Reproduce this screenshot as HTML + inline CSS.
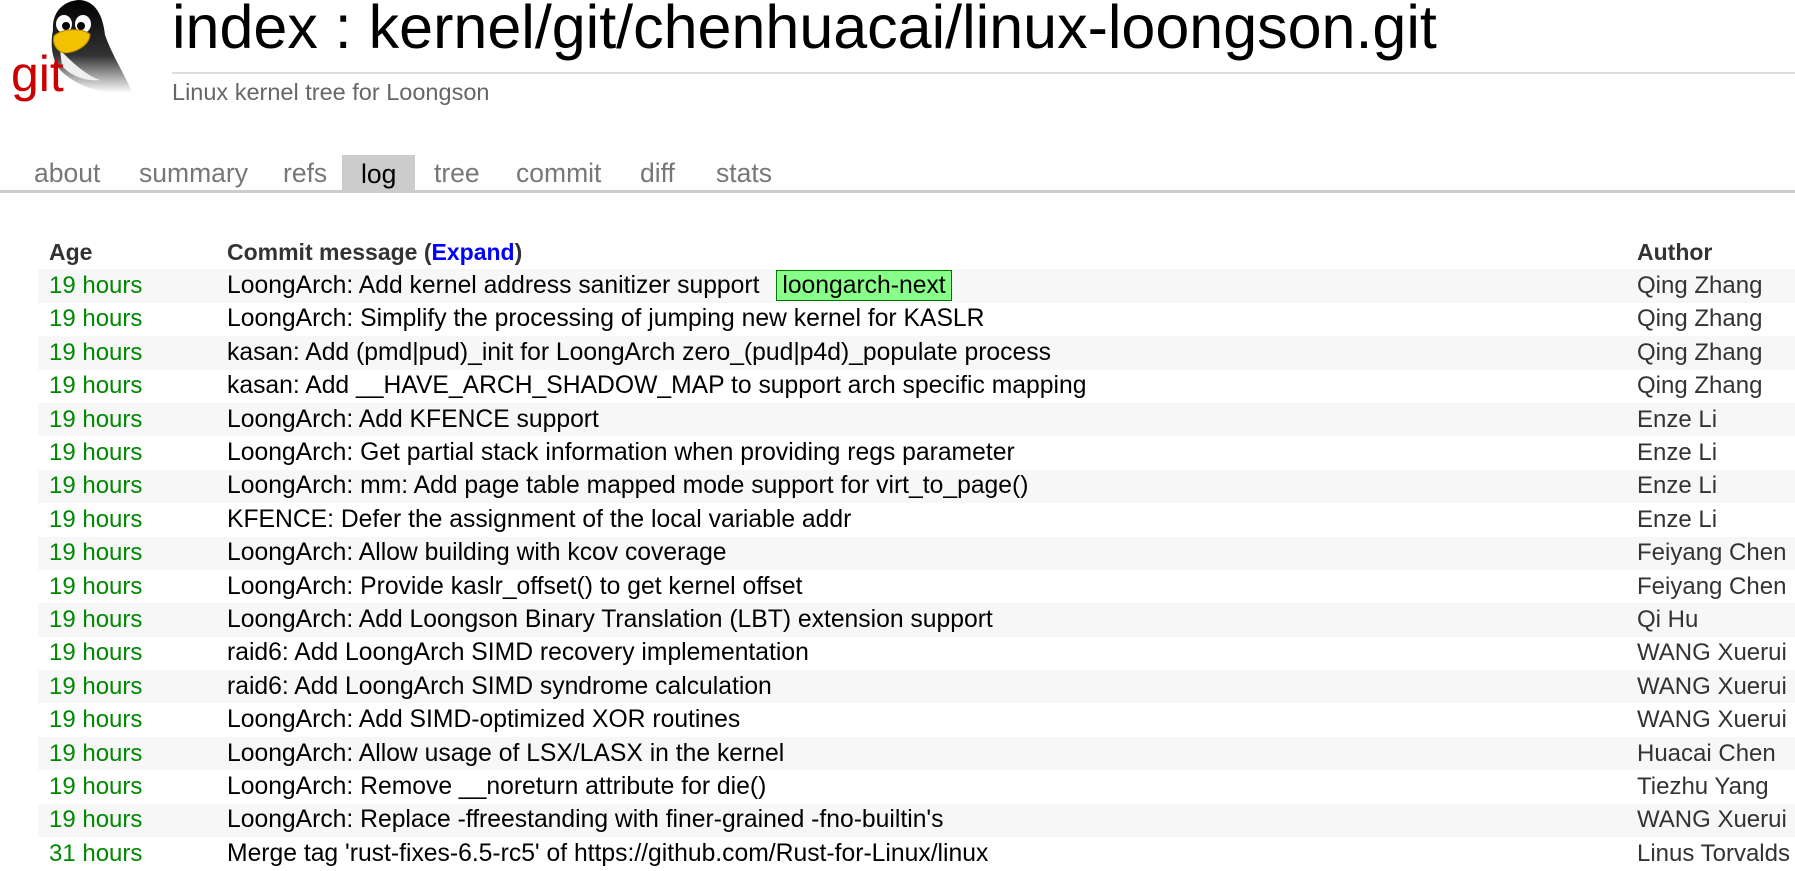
<!DOCTYPE html>
<html><head><meta charset="utf-8"><style>
body{margin:0;background:#fff;font-family:"Liberation Sans",sans-serif;width:1795px;height:871px;overflow:hidden;position:relative}
.logo{position:absolute;left:0;top:0}
.title{position:absolute;left:172px;top:-8px;font-size:61px;color:#000;white-space:nowrap}
.hr{position:absolute;left:172px;right:0;top:72px;height:2px;background:#ddd}
.sub{position:absolute;left:172px;top:79px;font-size:23.5px;color:#666}
.tabs{position:absolute;left:0;right:0;top:155px;height:35px;border-bottom:3px solid #ccc}
.tabs span{position:absolute;top:3px;font-size:26.5px;color:#777}
.tabs .act{background:#ccc;color:#000;top:0;height:35px;line-height:38px;padding:0 19px;left:342px}
table{position:absolute;left:38px;top:236px;border-collapse:collapse;width:1757px}
td,th{height:33.4px;padding:0 0 0 11px;font-size:24px;text-align:left;white-space:nowrap}
td.m{font-size:24.7px}
th{color:#333;font-weight:bold;font-size:23px}
td{color:#000}
td.a{color:#080}
td.u{color:#333}
tr.o td{background:#f7f7f7}
.deco{background:#88ff88;border:1px solid #007700;padding:1px 5px;margin-left:10px}
a{color:#00f;text-decoration:none}
</style></head><body>
<svg class="logo" width="140" height="110" viewBox="0 0 140 110">
<defs><linearGradient id="g" x1="0" y1="0" x2="0" y2="1"><stop offset="0" stop-color="#000"/><stop offset="0.6" stop-color="#333"/><stop offset="1" stop-color="#fff"/></linearGradient></defs>
<path d="M78 0 C60 2 52 15 53 30 C50 45 52 60 60 70 C80 90 110 95 132 92 C125 75 112 55 105 35 C103 15 95 0 78 0Z" fill="url(#g)"/>
<path d="M60 50 C70 60 85 75 100 80 C85 82 70 75 62 66Z" fill="#eee"/>
<ellipse cx="64" cy="24" rx="8" ry="9" fill="#fff"/><ellipse cx="83" cy="24" rx="8" ry="9" fill="#fff"/>
<circle cx="66" cy="26" r="4" fill="#000"/><circle cx="81" cy="26" r="4" fill="#000"/>
<path d="M54 36 C62 28 82 28 90 34 C90 45 76 53 64 53 C56 51 52 43 54 36Z" fill="#f2c200" stroke="#b08000" stroke-width="1"/>
<text x="11" y="91" font-family="Liberation Sans,sans-serif" font-size="50" fill="#c00">git</text>
</svg>
<div class="title">index : kernel/git/chenhuacai/linux-loongson.git</div>
<div class="hr"></div>
<div class="sub">Linux kernel tree for Loongson</div>
<div class="tabs">
<span style="left:34px">about</span><span style="left:139px">summary</span><span style="left:283px">refs</span><span class="act">log</span><span style="left:434px">tree</span><span style="left:516px">commit</span><span style="left:640px">diff</span><span style="left:716px">stats</span>
</div>
<table>
<colgroup><col style="width:178px"><col style="width:1410px"><col></colgroup>
<tr><th>Age</th><th>Commit message (<a>Expand</a>)</th><th>Author</th></tr>
<tr class="o"><td class="a">19 hours</td><td class="m">LoongArch: Add kernel address sanitizer support <span class="deco">loongarch-next</span></td><td class="u">Qing Zhang</td></tr>
<tr><td class="a">19 hours</td><td class="m">LoongArch: Simplify the processing of jumping new kernel for KASLR</td><td class="u">Qing Zhang</td></tr>
<tr class="o"><td class="a">19 hours</td><td class="m">kasan: Add (pmd|pud)_init for LoongArch zero_(pud|p4d)_populate process</td><td class="u">Qing Zhang</td></tr>
<tr><td class="a">19 hours</td><td class="m">kasan: Add __HAVE_ARCH_SHADOW_MAP to support arch specific mapping</td><td class="u">Qing Zhang</td></tr>
<tr class="o"><td class="a">19 hours</td><td class="m">LoongArch: Add KFENCE support</td><td class="u">Enze Li</td></tr>
<tr><td class="a">19 hours</td><td class="m">LoongArch: Get partial stack information when providing regs parameter</td><td class="u">Enze Li</td></tr>
<tr class="o"><td class="a">19 hours</td><td class="m">LoongArch: mm: Add page table mapped mode support for virt_to_page()</td><td class="u">Enze Li</td></tr>
<tr><td class="a">19 hours</td><td class="m">KFENCE: Defer the assignment of the local variable addr</td><td class="u">Enze Li</td></tr>
<tr class="o"><td class="a">19 hours</td><td class="m">LoongArch: Allow building with kcov coverage</td><td class="u">Feiyang Chen</td></tr>
<tr><td class="a">19 hours</td><td class="m">LoongArch: Provide kaslr_offset() to get kernel offset</td><td class="u">Feiyang Chen</td></tr>
<tr class="o"><td class="a">19 hours</td><td class="m">LoongArch: Add Loongson Binary Translation (LBT) extension support</td><td class="u">Qi Hu</td></tr>
<tr><td class="a">19 hours</td><td class="m">raid6: Add LoongArch SIMD recovery implementation</td><td class="u">WANG Xuerui</td></tr>
<tr class="o"><td class="a">19 hours</td><td class="m">raid6: Add LoongArch SIMD syndrome calculation</td><td class="u">WANG Xuerui</td></tr>
<tr><td class="a">19 hours</td><td class="m">LoongArch: Add SIMD-optimized XOR routines</td><td class="u">WANG Xuerui</td></tr>
<tr class="o"><td class="a">19 hours</td><td class="m">LoongArch: Allow usage of LSX/LASX in the kernel</td><td class="u">Huacai Chen</td></tr>
<tr><td class="a">19 hours</td><td class="m">LoongArch: Remove __noreturn attribute for die()</td><td class="u">Tiezhu Yang</td></tr>
<tr class="o"><td class="a">19 hours</td><td class="m">LoongArch: Replace -ffreestanding with finer-grained -fno-builtin's</td><td class="u">WANG Xuerui</td></tr>
<tr><td class="a">31 hours</td><td class="m">Merge tag 'rust-fixes-6.5-rc5' of https://github.com/Rust-for-Linux/linux</td><td class="u">Linus Torvalds</td></tr>
</table>
</body></html>
